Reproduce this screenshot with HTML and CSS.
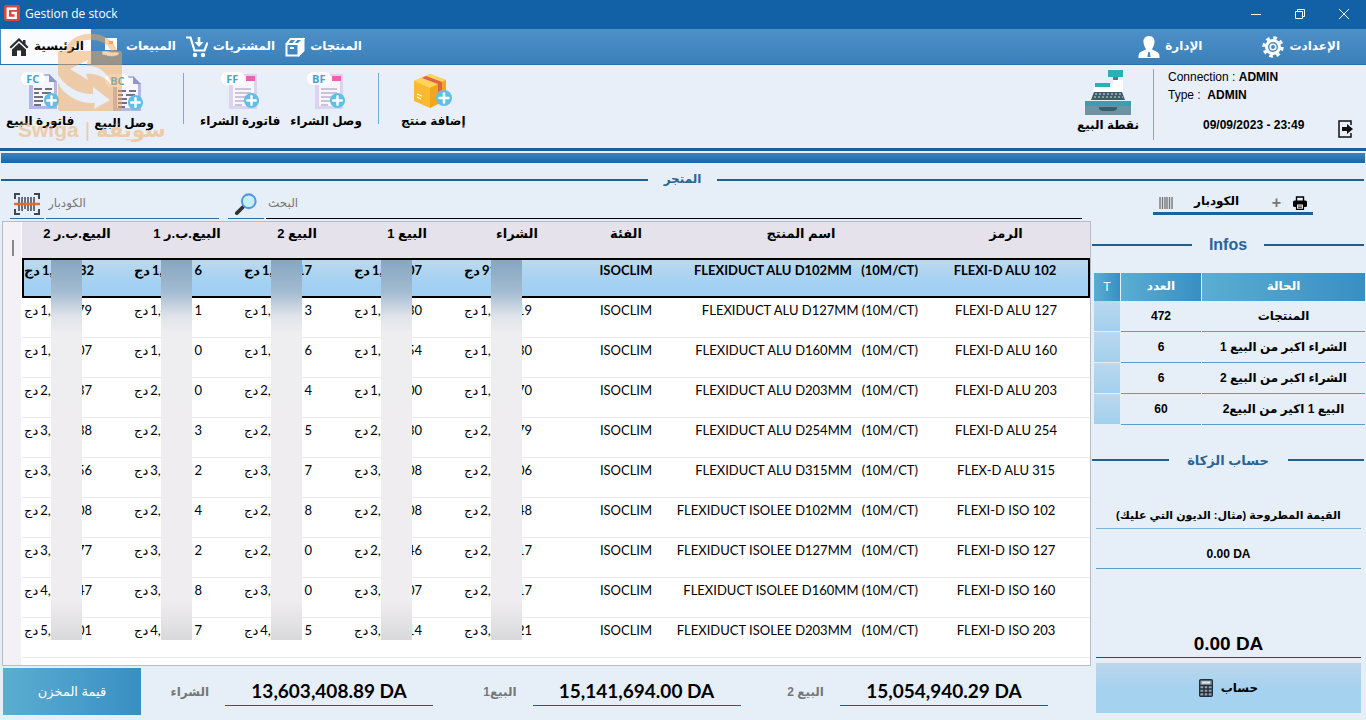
FILE: index.html
```html
<!DOCTYPE html>
<html lang="ar">
<head>
  <meta charset="UTF-8" />
  <meta name="viewport" content="width=device-width, initial-scale=1.0" />
  <title>Gestion de stock</title>
  <link rel="stylesheet" href="styles.css">
</head>
<body>
  <!-- shared icons -->
  <svg class="sprite" aria-hidden="true">
    <symbol id="plus" viewBox="0 0 18 18">
      <circle cx="9" cy="9" r="8" fill="#5fc0e6"/>
      <path d="M9 4.500v9M4.500 9h9" stroke="#fff" stroke-width="2.600" stroke-linecap="round"/>
    </symbol>
    <symbol id="doc-sale" viewBox="0 0 38 40">
      <path d="M8 2h20l8 8v27H8z" fill="#b3b8e0"/>
      <path d="M12 4h16l5 7v23H12z" fill="#f4f5fd"/>
      <path d="M28 2l8 8h-8z" fill="#9095cf"/>
      <path d="M13 17h8m3 0h7M13 21h5m3 0h9M13 25h9m2 0h7M13 29h9M13 33h7" stroke="#44475a" stroke-width="1.500"/>
      <rect width="24" height="13" rx="6" fill="#fff"/>
    </symbol>
    <symbol id="doc-buy" viewBox="0 0 38 40">
      <path d="M8 2h28v35H8z" fill="#dcd3ee"/>
      <path d="M12 4h21v30H12z" fill="#f8f5fd"/>
      <path d="M25 4h9v5h-9z" fill="#ee5fae"/>
      <path d="M14 17h16M14 21h16M14 25h16M14 29h9M14 33h7" stroke="#9a93b8" stroke-width="1.200"/>
      <rect width="24" height="13" rx="6" fill="#fff"/>
    </symbol>
  </svg>

  <div class="app">
    <header class="titlebar">
      <svg class="logo" viewBox="0 0 15 15"><rect width="15" height="15" rx="2" fill="#d8483e"/><path d="M12 3.500H3.500v8.500H11V7.500H7" fill="none" stroke="#fff" stroke-width="2.200"/></svg>
      <span class="app-name">Gestion de stock</span>
      <div class="window-buttons">
        <button aria-label="Minimize"><svg viewBox="0 0 12 12"><path d="M1 6.500h10"/></svg></button>
        <button aria-label="Restore"><svg viewBox="0 0 12 12"><path d="M1.500 3.500h7v7h-7zM3.500 3.500v-2h7v7h-2"/></svg></button>
        <button aria-label="Close"><svg viewBox="0 0 12 12"><path d="M1 1l10 10M11 1L1 11"/></svg></button>
      </div>
    </header>

    <nav class="menu">
      <a href="#" class="tab active">
        <svg viewBox="0 0 20 20" fill="#2b2b2b"><path d="M10 1L0.500 10l1.500 1.500 8-7.500 8 7.500 1.500-1.500-3-3V3h-2.500v2z"/><path d="M10 6l-7 6.500V19h14v-6.500z"/><path d="M8 13.500h4V19H8z" fill="#fff"/></svg>
        <span dir="rtl">الرئيسية</span>
      </a>
      <a href="#" class="tab">
        <svg viewBox="0 0 20 20" fill="#fff"><path d="M4 1h12v12H4z"/><path d="M8 4h4v3H8z" fill="#e5a765"/><path d="M1 14h5c3 0 4 2 6 1h5c2 1 1 3-1 3.500-5 1.500-10 1-12-.5H1z" stroke="#4588c2" stroke-width=".6"/></svg>
        <span dir="rtl">المبيعات</span>
      </a>
      <a href="#" class="tab wide-icon">
        <svg viewBox="0 0 22 22"><path d="M0 1.500h4.500l4 13h10l3-8" fill="none" stroke="#fff" stroke-width="2.200"/><path d="M13 1v6" stroke="#fff" stroke-width="2.600"/><path d="M8.500 6h9L13 11z" fill="#fff"/><circle cx="9" cy="19" r="2.200" fill="#fff"/><circle cx="17" cy="19" r="2.200" fill="#fff"/></svg>
        <span dir="rtl">المشتريات</span>
      </a>
      <a href="#" class="tab">
        <svg viewBox="0 0 20 20" fill="none" stroke="#fff" stroke-width="2"><path d="M1.500 7h12v11.500h-12zM1.500 7l4-5h13l-5 5M18.500 2v11.500l-5 5M8 7l4-5M5 11h4"/><path d="M14 7.500l4-4.500v10l-4 4.500z" fill="#fff"/></svg>
        <span dir="rtl">المنتجات</span>
      </a>
      <a href="#" class="tab admin">
        <svg viewBox="0 0 22 22" fill="#fff"><path d="M11 0c4 0 6 3 5.500 6.500-.3 3-1.500 5-2.500 6.500 1 2 7 2 7.500 6.500V22H.5v-2.500C1 15 7 15 8 13c-1-1.500-2.200-3.500-2.500-6.500C5 3 7 0 11 0z"/><path d="M10.200 16h1.600l.8 5h-3.200z" fill="#4588c2"/></svg>
        <span dir="rtl">الإدارة</span>
      </a>
      <a href="#" class="tab settings">
        <svg viewBox="0 0 22 22" fill="none" stroke="#fff"><circle cx="11" cy="11" r="6.500" stroke-width="3"/><circle cx="11" cy="11" r="2.800" stroke-width="1.600"/><circle cx="11" cy="11" r="9.200" stroke-width="3" stroke-dasharray="3.600 3.625"/></svg>
        <span dir="rtl">الإعدادت</span>
      </a>
    </nav>

    <section class="ribbon">
      <div class="group sales">
        <button class="tool">
          <span class="pic"><svg viewBox="0 0 38 40"><use href="#doc-sale"/><use href="#plus" x="22" y="20" width="17" height="17"/></svg><em>FC</em></span>
          <span dir="rtl">فاتورة البيع</span>
        </button>
        <button class="tool low">
          <span class="pic"><svg viewBox="0 0 38 40"><use href="#doc-sale"/><use href="#plus" x="22" y="20" width="17" height="17"/></svg><em>BC</em></span>
          <span dir="rtl">وصل البيع</span>
        </button>
      </div>
      <div class="group buys">
        <button class="tool">
          <span class="pic"><svg viewBox="0 0 38 40"><use href="#doc-buy"/><use href="#plus" x="22" y="20" width="17" height="17"/></svg><em>FF</em></span>
          <span dir="rtl">فاتورة الشراء</span>
        </button>
        <button class="tool">
          <span class="pic"><svg viewBox="0 0 38 40"><use href="#doc-buy"/><use href="#plus" x="22" y="20" width="17" height="17"/></svg><em>BF</em></span>
          <span dir="rtl">وصل الشراء</span>
        </button>
      </div>
      <div class="group">
        <button class="tool">
          <span class="pic"><svg viewBox="0 0 38 40"><path d="M0 9L16 2l16 6v20l-16 8L0 29z" fill="#fbb92f"/><path d="M0 9L16 2l16 6-16 8z" fill="#ffd35c"/><path d="M16 16l16-8v20l-16 8z" fill="#f2a51f"/><path d="M8 6l4-2 16 6v8l-4 2v-8z" fill="#e2604a"/><path d="M3 22l5 2M3 25l4 2" stroke="#fff" stroke-width="1.300"/><use href="#plus" x="21" y="17" width="18" height="18"/></svg></span>
          <span dir="rtl">إضافة منتج</span>
        </button>
      </div>
      <div class="group pos">
        <button class="tool">
          <svg class="register" viewBox="0 0 46 46"><path d="M23 1h15v7H23z" fill="#2bb0b5"/><path d="M28 8h5v3h-5z" fill="#5d7a8d"/><path d="M28 11h10v12H8l2-8h18z" fill="#fff"/><path d="M10 14h15v4H10z" fill="#2bb0b5"/><path d="M9 23h28l3 8H6z" fill="#40596b"/><path d="M10 25h27M9 28h29" stroke="#cfe0e8" stroke-dasharray="2 2"/><path d="M0 32h46v6H0z" fill="#3e9db0"/><path d="M0 37h46v9H0z" fill="#6d93a3"/><path d="M14 38h18v2l-3 2H17l-3-2z" fill="#40596b"/></svg>
          <span dir="rtl">نقطة البيع</span>
        </button>
      </div>
      <div class="session">
        <p>Connection : <strong>ADMIN</strong></p>
        <p>Type :&nbsp; <strong>ADMIN</strong></p>
        <div class="clock">
          <strong>09/09/2023 - 23:49</strong>
          <button aria-label="Logout"><svg viewBox="0 0 16 18"><path d="M13 5V1H1v16h12v-4" fill="none" stroke="#111" stroke-width="1.500"/><path d="M4 7h5V4l6 5-6 5v-3H4z" fill="#111"/></svg></button>
        </div>
      </div>
    </section>
    <div class="band"></div>

    <h1 class="rule store-title" dir="rtl"><span>المتجر</span></h1>

    <div class="content">
      <main>
        <div class="search">
          <label class="icon-field" for="barcode">
            <svg viewBox="0 0 26 22"><path d="M1 6V1h5M20 1h5v5M1 16v5h5M20 21h5v-5" fill="none" stroke="#3c4a55" stroke-width="2"/><path d="M5 4v14M8 4v14M11 4v12M14 4v14M17 4v14M20 4v14" stroke="#3c4a55" stroke-width="1.500"/><path d="M0 11h26" stroke="#e8692a" stroke-width="2.500"/></svg>
          </label>
          <input id="barcode" type="text" placeholder="الكودبار">
          <label class="icon-field find" for="query">
            <svg viewBox="0 0 24 24"><path d="M2 22l7-7" stroke="#333" stroke-width="4" stroke-linecap="round"/><circle cx="15" cy="9" r="7.500" fill="#c5effd" stroke="#5497e4" stroke-width="2.200"/></svg>
          </label>
          <input id="query" class="query" type="text" placeholder="البحث">
        </div>

        <div class="grid-box">
          <table class="products">
            <colgroup><col class="c-mark"><col span="5" class="c-price"><col class="c-family"><col class="c-name"><col class="c-code"></colgroup>
            <thead>
              <tr><th class="mark"></th><th dir="rtl">البيع.ب.ر 2</th><th dir="rtl">البيع.ب.ر 1</th><th dir="rtl">البيع 2</th><th dir="rtl">البيع 1</th><th dir="rtl">الشراء</th><th class="family" dir="rtl">الفئة</th><th class="name-head" dir="rtl">اسم المنتج</th><th dir="rtl">الرمز</th></tr>
            </thead>
            <tbody>
              <tr class="selected">
                <td class="mark"></td>
                <td><div class="amount"><bdi>دج</bdi><span>1,</span><i>32</i><div class="mask"></div></div></td>
                <td><div class="amount"><bdi>دج</bdi><span>1,3</span><i>6</i><div class="mask"></div></div></td>
                <td><div class="amount"><bdi>دج</bdi><span>1,</span><i>17</i><div class="mask"></div></div></td>
                <td><div class="amount"><bdi>دج</bdi><span>1,</span><i>07</i><div class="mask"></div></div></td>
                <td><div class="amount"><bdi>دج</bdi><span>91</span><div class="mask"></div></div></td>
                <td class="family">ISOCLIM</td><td class="name">FLEXIDUCT ALU D102MM   (10M/CT)</td><td class="code">FLEXI-D ALU 102</td>
              </tr>
              <tr>
                <td class="mark"></td>
                <td><div class="amount"><bdi>دج</bdi><span>1,</span><i>79</i></div></td>
                <td><div class="amount"><bdi>دج</bdi><span>1,4</span><i>1</i></div></td>
                <td><div class="amount"><bdi>دج</bdi><span>1,</span><i>3</i></div></td>
                <td><div class="amount"><bdi>دج</bdi><span>1,</span><i>30</i></div></td>
                <td><div class="amount"><bdi>دج</bdi><span>1,</span><i>19</i></div></td>
                <td class="family">ISOCLIM</td><td class="name">FLEXIDUCT ALU D127MM (10M/CT)</td><td class="code">FLEXI-D ALU 127</td>
              </tr>
              <tr>
                <td class="mark"></td>
                <td><div class="amount"><bdi>دج</bdi><span>1,</span><i>07</i></div></td>
                <td><div class="amount"><bdi>دج</bdi><span>1,8</span><i>0</i></div></td>
                <td><div class="amount"><bdi>دج</bdi><span>1,6</span><i>6</i></div></td>
                <td><div class="amount"><bdi>دج</bdi><span>1,</span><i>54</i></div></td>
                <td><div class="amount"><bdi>دج</bdi><span>1,</span><i>30</i></div></td>
                <td class="family">ISOCLIM</td><td class="name">FLEXIDUCT ALU D160MM   (10M/CT)</td><td class="code">FLEXI-D ALU 160</td>
              </tr>
              <tr>
                <td class="mark"></td>
                <td><div class="amount"><bdi>دج</bdi><span>2,</span><i>37</i></div></td>
                <td><div class="amount"><bdi>دج</bdi><span>2,3</span><i>0</i></div></td>
                <td><div class="amount"><bdi>دج</bdi><span>2,0</span><i>4</i></div></td>
                <td><div class="amount"><bdi>دج</bdi><span>1,</span><i>00</i></div></td>
                <td><div class="amount"><bdi>دج</bdi><span>1,</span><i>70</i></div></td>
                <td class="family">ISOCLIM</td><td class="name">FLEXIDUCT ALU D203MM   (10M/CT)</td><td class="code">FLEXI-D ALU 203</td>
              </tr>
              <tr>
                <td class="mark"></td>
                <td><div class="amount"><bdi>دج</bdi><span>3,</span><i>38</i></div></td>
                <td><div class="amount"><bdi>دج</bdi><span>2,9</span><i>3</i></div></td>
                <td><div class="amount"><bdi>دج</bdi><span>2,6</span><i>5</i></div></td>
                <td><div class="amount"><bdi>دج</bdi><span>2,</span><i>30</i></div></td>
                <td><div class="amount"><bdi>دج</bdi><span>2,</span><i>79</i></div></td>
                <td class="family">ISOCLIM</td><td class="name">FLEXIDUCT ALU D254MM   (10M/CT)</td><td class="code">FLEXI-D ALU 254</td>
              </tr>
              <tr>
                <td class="mark"></td>
                <td><div class="amount"><bdi>دج</bdi><span>3,</span><i>56</i></div></td>
                <td><div class="amount"><bdi>دج</bdi><span>3,7</span><i>2</i></div></td>
                <td><div class="amount"><bdi>دج</bdi><span>3,3</span><i>7</i></div></td>
                <td><div class="amount"><bdi>دج</bdi><span>3,</span><i>08</i></div></td>
                <td><div class="amount"><bdi>دج</bdi><span>2,</span><i>06</i></div></td>
                <td class="family">ISOCLIM</td><td class="name">FLEXIDUCT ALU D315MM   (10M/CT)</td><td class="code">FLEX-D ALU 315</td>
              </tr>
              <tr>
                <td class="mark"></td>
                <td><div class="amount"><bdi>دج</bdi><span>2,</span><i>08</i></div></td>
                <td><div class="amount"><bdi>دج</bdi><span>2,7</span><i>4</i></div></td>
                <td><div class="amount"><bdi>دج</bdi><span>2,4</span><i>8</i></div></td>
                <td><div class="amount"><bdi>دج</bdi><span>2,</span><i>08</i></div></td>
                <td><div class="amount"><bdi>دج</bdi><span>2,</span><i>48</i></div></td>
                <td class="family">ISOCLIM</td><td class="name">FLEXIDUCT ISOLEE D102MM   (10M/CT)</td><td class="code">FLEXI-D ISO 102</td>
              </tr>
              <tr>
                <td class="mark"></td>
                <td><div class="amount"><bdi>دج</bdi><span>3,</span><i>77</i></div></td>
                <td><div class="amount"><bdi>دج</bdi><span>3,1</span><i>2</i></div></td>
                <td><div class="amount"><bdi>دج</bdi><span>2,7</span><i>0</i></div></td>
                <td><div class="amount"><bdi>دج</bdi><span>2,</span><i>46</i></div></td>
                <td><div class="amount"><bdi>دج</bdi><span>2,</span><i>17</i></div></td>
                <td class="family">ISOCLIM</td><td class="name">FLEXIDUCT ISOLEE D127MM   (10M/CT)</td><td class="code">FLEXI-D ISO 127</td>
              </tr>
              <tr>
                <td class="mark"></td>
                <td><div class="amount"><bdi>دج</bdi><span>4,</span><i>47</i></div></td>
                <td><div class="amount"><bdi>دج</bdi><span>3,8</span><i>8</i></div></td>
                <td><div class="amount"><bdi>دج</bdi><span>3,4</span><i>0</i></div></td>
                <td><div class="amount"><bdi>دج</bdi><span>3,</span><i>07</i></div></td>
                <td><div class="amount"><bdi>دج</bdi><span>2,</span><i>17</i></div></td>
                <td class="family">ISOCLIM</td><td class="name">FLEXIDUCT ISOLEE D160MM (10M/CT)</td><td class="code">FLEXI-D ISO 160</td>
              </tr>
              <tr>
                <td class="mark"></td>
                <td><div class="amount"><bdi>دج</bdi><span>5,</span><i>01</i></div></td>
                <td><div class="amount"><bdi>دج</bdi><span>4,7</span><i>7</i></div></td>
                <td><div class="amount"><bdi>دج</bdi><span>4,3</span><i>5</i></div></td>
                <td><div class="amount"><bdi>دج</bdi><span>3,</span><i>14</i></div></td>
                <td><div class="amount"><bdi>دج</bdi><span>3,</span><i>21</i></div></td>
                <td class="family">ISOCLIM</td><td class="name">FLEXIDUCT ISOLEE D203MM   (10M/CT)</td><td class="code">FLEXI-D ISO 203</td>
              </tr>
            </tbody>
          </table>
        </div>

        <footer class="totals">
          <button class="stock-value" dir="rtl">قيمة المخزن</button>
          <div class="total first"><span dir="rtl">الشراء</span><output>13,603,408.89 DA</output></div>
          <div class="total"><span dir="rtl">البيع1</span><output>15,141,694.00 DA</output></div>
          <div class="total"><span dir="rtl">البيع 2</span><output>15,054,940.29 DA</output></div>
        </footer>
      </main>

      <aside>
        <div class="barcode-tools">
          <svg class="bars" viewBox="0 0 14 12"><path d="M1 0v12M3.500 0v12M6 0v12M8 0v12M10.500 0v12M13 0v12" stroke="#777" stroke-width="1.400"/></svg>
          <span dir="rtl">الكودبار</span>
          <button class="add" aria-label="Add">+</button>
          <button class="print" aria-label="Print"><svg viewBox="0 0 14 14"><path d="M3.500 5V1h7v4" fill="none" stroke="#000" stroke-width="1.400"/><rect y="4.500" width="14" height="6.500" rx="1.500"/><path d="M3.500 8h7v5.300h-7z" fill="#fff" stroke="#000" stroke-width="1.200"/><path d="M5 10h4M5 11.700h4" stroke="#000" stroke-width=".8"/></svg></button>
        </div>
        <h2 class="rule infos-title"><span>Infos</span></h2>
        <table class="infos">
          <colgroup><col class="c-t"><col class="c-count"><col></colgroup>
          <thead><tr><th>T</th><th dir="rtl">العدد</th><th dir="rtl">الحالة</th></tr></thead>
          <tbody>
            <tr><td></td><td>472</td><td dir="rtl">المنتجات</td></tr>
            <tr><td></td><td>6</td><td dir="rtl">الشراء اكبر من البيع 1</td></tr>
            <tr><td></td><td>6</td><td dir="rtl">الشراء اكبر من البيع 2</td></tr>
            <tr><td></td><td>60</td><td dir="rtl">البيع 1 اكير من البيع2</td></tr>
          </tbody>
        </table>
        <h2 class="rule zakat-title" dir="rtl"><span>حساب الزكاة</span></h2>
        <div class="zakat">
          <label for="debts" dir="rtl">القيمة المطروحة (مثال: الديون التي عليك)</label>
          <input id="debts" type="text" value="0.00 DA">
          <output>0.00 DA</output>
          <button>
            <svg viewBox="0 0 14 18"><rect x=".7" y=".7" width="12.600" height="16.600" rx="1" fill="#8fa0ac" stroke="#23303a" stroke-width="1.400"/><path d="M1 6.500h12M1 10h12M1 13.500h12M5 6.500v11M9 6.500v11" stroke="#23303a" stroke-width="1.400"/><path d="M3 3.500h8" stroke="#dfe8ee" stroke-width="2"/></svg>
            <span dir="rtl">حساب</span>
          </button>
        </div>
      </aside>
    </div>

    <div class="watermark">
      <svg viewBox="0 0 64 84"><path d="M11 22C13 4 50 2 56 22" fill="none" stroke="#f2a85c" stroke-width="6"/><path fill="#f2a85c" fill-rule="evenodd" d="M2 22h60a2 2 0 0 1 2 2v56a2 2 0 0 1-2 2H2a2 2 0 0 1-2-2V24a2 2 0 0 1 2-2zM12 40l18-9-2 6c12-1 22 6 26 19-8-9-17-12-26-11l2 6zM0 46c8 12 20 19 35 19v-7l17 13-16 9 1-6C20 75 6 66 0 54z"/></svg>
      <div class="brand"><span>Swiga</span><span class="bar">|</span><span dir="rtl">سويقة</span></div>
    </div>
  </div>
</body>
</html>
```

FILE: styles.css
```css
* {
  box-sizing: border-box;
}
body {
  margin: 0;
  background: #e6eff8;
  font-family: "Liberation Sans", "DejaVu Sans", sans-serif;
  color: #000;
}
button, input {
  font: inherit;
  color: inherit;
  border: none;
  background: none;
  padding: 0;
}
button {
  cursor: pointer;
}
a {
  color: inherit;
  text-decoration: none;
}
p, h1, h2 {
  margin: 0;
}
.sprite {
  display: none;
}
.app {
  position: relative;
  display: flex;
  flex-direction: column;
  min-height: 100vh;
}

/* title bar */
.titlebar {
  display: flex;
  align-items: center;
  height: 29px;
  padding-left: 4px;
  background: #1261a6;
  color: #fff;
}
.logo {
  width: 16px;
  height: 16px;
  margin-bottom: 3px;
}
.app-name {
  margin-left: 5px;
  padding-bottom: 2px;
  font: 12px "Open Sans", sans-serif;
}
.window-buttons {
  display: flex;
  margin-left: auto;
}
.window-buttons button {
  width: 44px;
  height: 26px;
}
.window-buttons svg {
  width: 12px;
  height: 12px;
  fill: none;
  stroke: #fff;
}

/* menu */
.menu {
  display: flex;
  height: 36px;
  background: linear-gradient(#4d90c8, #3c80bb);
  border-bottom: 1px solid #2f6ea8;
  color: #fff;
  font-size: 12px;
  font-weight: bold;
}
.tab {
  display: flex;
  align-items: center;
  gap: 5px;
  margin-right: 10px;
}
.tab svg {
  width: 20px;
  height: 20px;
}
.tab.active {
  width: 90px;
  margin-left: 1px;
  padding-left: 8px;
  background: #fafbfe;
  color: #000;
}
.tab span {
  padding-bottom: 2px;
}
.tab.wide-icon svg, .admin svg, .settings svg {
  width: 22px;
  height: 22px;
}
.tab.admin {
  margin-left: auto;
  margin-right: 60px;
}
.tab.settings {
  margin-right: 26px;
}

/* ribbon */
.ribbon {
  display: flex;
  height: 86px;
  background: #e8eff9;
  border-bottom: 3px solid #1f5c98;
}
.group {
  display: flex;
  gap: 10px;
  padding: 7px 22px 0;
  position: relative;
}
.group.sales {
  width: 184px;
  gap: 20px;
  padding: 7px 6px 0;
}
.group.buys {
  width: 195px;
  padding: 7px 16px 0;
}
.group.sales::after, .group.buys::after, .group.pos::after {
  content: "";
  position: absolute;
  right: 0;
  top: 8px;
  bottom: 24px;
  width: 1px;
  background: #6cb0dc;
}
.tool {
  display: flex;
  flex-direction: column;
  align-items: center;
  white-space: nowrap;
  font-size: 12px;
  font-weight: bold;
}
.tool.low {
  padding-top: 2px;
}
.pic {
  position: relative;
  height: 40px;
  margin-bottom: 2px;
}
.pic svg {
  width: 38px;
  height: 40px;
}
.pic em {
  position: absolute;
  left: 5px;
  top: 1px;
  font: bold 11px "Open Sans", sans-serif;
  line-height: 12px;
  color: #3aa3d8;
}
.group.pos {
  margin-left: auto;
  padding: 4px 15px 0;
}
.register {
  width: 46px;
  height: 46px;
  margin-bottom: 3px;
}
.group.pos::after {
  top: 4px;
  bottom: 8px;
}
.session {
  width: 212px;
  padding: 3px 12px 0 14px;
  font-size: 12px;
  line-height: 18px;
}
.clock {
  display: flex;
  justify-content: space-between;
  align-items: center;
  padding: 8px 0 0 35px;
}
.clock button {
  height: 18px;
  margin-top: 8px;
}
.clock svg {
  width: 16px;
  height: 18px;
}
.band {
  height: 10px;
  margin: 2px 1px 0;
  background: linear-gradient(#3c82bd, #1d65a3);
}

/* headings on a line */
.rule {
  display: flex;
  align-items: center;
  color: #2a6496;
}
.rule::before, .rule::after {
  content: "";
  flex: 1;
  height: 2px;
  background: #215f8f;
}
.rule span {
  text-align: center;
}
.store-title {
  height: 26px;
  margin: 4px 2px 0 1px;
  font-size: 12px;
}
.store-title span {
  padding: 0 16px 2px;
}

.content {
  flex: 1;
  display: flex;
}
main {
  flex: 1;
  min-width: 0;
  display: flex;
  flex-direction: column;
}

/* search */
.search {
  display: flex;
  align-items: flex-end;
  height: 26px;
  padding: 0 10px;
}
.icon-field {
  width: 34px;
  height: 26px;
  margin-right: 2px;
  border-bottom: 1px solid #2a70ad;
  text-align: center;
}
.icon-field svg {
  width: 26px;
  height: 22px;
}
.icon-field.find {
  width: 36px;
  margin-left: 9px;
}
.search input {
  width: 173px;
  height: 26px;
  padding: 0 2px 5px;
  border-bottom: 1px solid #2a70ad;
  font-size: 12px;
}
.search .query {
  flex: 1;
  border-color: #000;
}
.search input::placeholder {
  color: #777;
  opacity: 1;
}

/* products */
.grid-box {
  flex: 1;
  margin: 2px 1px 0 2px;
  border: 1px solid #b4bccb;
  background: #fff linear-gradient(#f3f1f6, #f3f1f6) left / 18px 100% no-repeat;
}
.products {
  width: 100%;
  border-collapse: separate;
  border-spacing: 0;
  table-layout: fixed;
  font: 13px Lato, "DejaVu Sans", sans-serif;
}
.c-mark { width: 19px; }
.c-price { width: 110px; }
.c-family { width: 98px; }
.c-code { width: 168px; }
.products th {
  height: 36px;
  padding: 4px 0 0;
  background: #e5e2eb;
  vertical-align: top;
  font: bold 13px "Liberation Sans", "DejaVu Sans", sans-serif;
}
.products th.mark {
  background: linear-gradient(#888, #888) 9px 18px / 2px 16px no-repeat;
}
.products td {
  height: 40px;
  padding: 4px 0 0;
  border-bottom: 1px solid #ebebeb;
  vertical-align: top;
  line-height: 16px;
  text-align: center;
}
.products td.mark {
  border-bottom: none;
}
.products .family, .products .name-head {
  padding-left: 10px;
}
.products .name {
  text-align: right;
  padding-right: 4px;
  white-space: pre;
}
.amount {
  position: relative;
  display: flex;
  gap: 2px;
  width: 70px;
  padding-left: 2px;
}
.amount i {
  margin-left: auto;
  font-style: normal;
}
.mask {
  position: absolute;
  z-index: 1;
  left: 29px;
  top: -2px;
  width: 31px;
  height: 380px;
  background: linear-gradient(#86a6c2, #a3bcd1 32px, #dfe3e9 56px, #eeedf0 72px, #efedf0 340px, #d9d9da);
}
.selected {
  font-weight: bold;
}
.products .selected td:not(.mark) {
  background: linear-gradient(#bcd9ee, #a1d0f2 70%);
  border-top: 2px solid #000;
  border-bottom: 2px solid #000;
  padding-top: 2px;
}
.selected td:nth-child(2) {
  border-left: 2px solid #000;
}
.selected td:nth-child(2) .amount {
  padding-left: 0;
}
.selected td:nth-child(2) .mask {
  left: 27px;
}
.selected td:last-child {
  border-right: 2px solid #000;
}

/* totals */
.totals {
  display: flex;
  height: 54px;
  padding: 2px 44px 5px 3px;
}
.stock-value {
  width: 138px;
  background: linear-gradient(90deg, #5badd1, #388fc3);
  color: #fff;
  font-size: 13px;
}
.total {
  flex: 20;
  display: flex;
  justify-content: flex-end;
  align-items: center;
  gap: 16px;
  color: #777;
  font-size: 12px;
  font-weight: bold;
}
.total.first {
  flex: 19;
}
.total output {
  width: 208px;
  height: 28px;
  border-bottom: 1px solid #1f5c98;
  color: #000;
  font: bold 19px Lato, sans-serif;
  line-height: 26px;
  text-align: center;
}

/* right panel */
aside {
  width: 274px;
  display: flex;
  flex-direction: column;
  padding-bottom: 7px;
}
.barcode-tools {
  display: flex;
  align-items: center;
  width: 160px;
  height: 22px;
  margin-left: 61px;
  padding: 0 6px;
  border-bottom: 3px solid #1f6199;
  font-size: 12px;
  font-weight: bold;
}
.bars {
  width: 14px;
  height: 12px;
  margin-right: 21px;
}
.barcode-tools span {
  padding-bottom: 3px;
}
.add {
  margin-left: auto;
  margin-right: 12px;
  color: #777;
  font-size: 16px;
  font-weight: bold;
}
.print {
  height: 14px;
}
.print svg {
  display: block;
  width: 14px;
  height: 14px;
}
.infos-title {
  height: 20px;
  margin: 20px 2px 18px 0;
  font-size: 16px;
}
.infos-title span {
  width: 72px;
}
.infos {
  width: 273px;
  margin-left: 1px;
  border-collapse: separate;
  border-spacing: 1px 0;
  table-layout: fixed;
  font-size: 12px;
  font-weight: bold;
  text-align: center;
}
.c-t { width: 26px; }
.c-count { width: 80px; }
.infos th {
  height: 28px;
  padding: 0 0 3px;
  background: linear-gradient(90deg, #5badd1, #388fc3);
  color: #fff;
}
.infos th:first-child {
  padding: 0;
  font-weight: normal;
}
.infos td {
  height: 31px;
  padding: 0;
  border-bottom: 1px solid #5c9cc9;
}
.infos td:first-child {
  background: linear-gradient(#bbd8ee, #a2d0ee);
  border-color: #e6eff8;
}
.zakat-title {
  height: 24px;
  margin: 23px 2px 31px 0;
  font-size: 13px;
}
.zakat-title span {
  width: 119px;
}
.zakat {
  flex: 1;
  display: flex;
  flex-direction: column;
  padding: 0 5px 0 4px;
  font-weight: bold;
  text-align: center;
}
.zakat label {
  height: 26px;
  border-bottom: 1px solid #7db4da;
  font-size: 11px;
  line-height: 24px;
}
.zakat input {
  width: 100%;
  height: 40px;
  padding-top: 10px;
  border-bottom: 1px solid #5c9cc9;
  font-size: 12px;
  text-align: center;
}
.zakat output {
  margin-top: auto;
  height: 28px;
  border-bottom: 1px solid #1f4f80;
  font-size: 19px;
  line-height: 28px;
}
.zakat button {
  display: flex;
  justify-content: center;
  align-items: center;
  gap: 8px;
  height: 50px;
  margin-top: 5px;
  background: linear-gradient(#bbd6ec, #a5d2ef 50%);
  font-size: 12px;
}
.zakat button svg {
  width: 14px;
  height: 18px;
}

/* brand mark laid over the ribbon */
.watermark {
  position: absolute;
  left: 18px;
  top: 29px;
  width: 150px;
  opacity: 0.5;
  pointer-events: none;
  color: #f2a85c;
}
.watermark svg {
  display: block;
  width: 64px;
  height: 84px;
  margin-left: 40px;
}
.brand {
  display: flex;
  gap: 6px;
  padding-top: 2px;
  font-size: 21px;
  font-weight: bold;
  line-height: 30px;
}
.brand .bar {
  font-weight: normal;
}
```
